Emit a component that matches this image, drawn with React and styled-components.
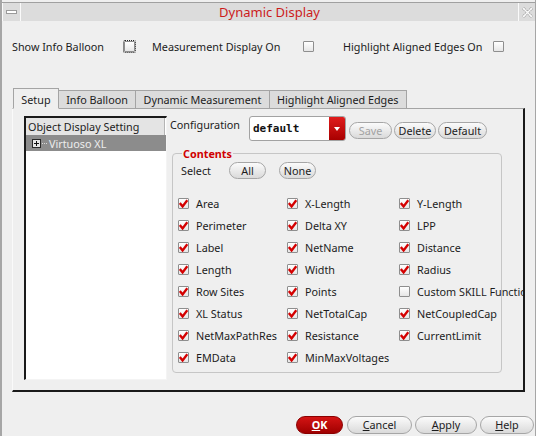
import React from 'react'
import styled, { createGlobalStyle } from 'styled-components'

const GlobalStyle = createGlobalStyle`
  html, body {
    margin: 0;
    padding: 0;
    background: #efefef;
  }
  body {
    font-family: 'Noto Sans', 'DejaVu Sans', sans-serif;
    font-size: 10.8px;
    color: #1c1c1c;
  }
`

const Window = styled.div`
  width: 536px;
  height: 436px;
  box-sizing: border-box;
  border-left: 2px solid #a6a6a6;
  border-right: 1px solid #a6a6a6;
  padding-top: 3px;
  overflow: hidden;
  background: #efefef;
`

const TitleBar = styled.div`
  display: flex;
  height: 18px;
  gap: 1px;
  padding-left: 1px;
  background: #fafafa;
  border-top: 1px solid #a0a0a0;
  margin-top: -1px;
`

const TitleButton = styled.div`
  width: ${p => p.$w}px;
  background: #dcdcdc;
  display: flex;
  align-items: center;
  justify-content: center;
`

const MinGlyph = styled.span`
  width: 9px;
  height: 2px;
  background: #fff;
  border: 1px solid #9a9a9a;
`

const Title = styled.div`
  flex: 1;
  background: #dcdcdc;
  color: #cc1b1b;
  font-size: 13px;
  line-height: 18px;
  text-align: center;
`

const TopRow = styled.div`
  display: flex;
  align-items: center;
  height: 16px;
  margin: 17px 0 0 10px;
`

const TopItem = styled.label`
  display: flex;
  align-items: center;
  margin-right: ${p => p.$after || 0}px;
`

const TopLabel = styled.span`
  width: ${p => p.$w}px;
  white-space: nowrap;
`

const Box = styled.span`
  display: inline-flex;
  align-items: center;
  justify-content: center;
  width: 11px;
  height: 11px;
  box-sizing: border-box;
  border: 1px solid #8e8e8e;
  border-radius: 1px;
  background: linear-gradient(#ffffff, #e6e6e6);
  flex: none;
  outline: ${p => (p.$focus ? '1px dotted #222' : 'none')};
  outline-offset: 0;
`

const Tabs = styled.div`
  display: flex;
  align-items: flex-end;
  height: 21px;
  margin: 34px 0 -1px 11px;
  position: relative;
  z-index: 1;
`

const Tab = styled.div`
  box-sizing: border-box;
  height: ${p => (p.$active ? 21 : 19)}px;
  padding: 0 7.3px;
  line-height: ${p => (p.$active ? 21 : 18)}px;
  border: 1px solid #a4a4a4;
  border-left: ${p => (p.$first ? '1px solid #a4a4a4' : 'none')};
  border-bottom: ${p => (p.$active ? '1px solid #efefef' : '1px solid #a4a4a4')};
  background: ${p => (p.$active ? '#efefef' : '#dcdcdc')};
  color: #1c1c1c;
  white-space: nowrap;
`

const Panel = styled.div`
  box-sizing: border-box;
  width: 513px;
  height: 284px;
  margin-left: 10px;
  border-top: 1px solid #a4a4a4;
  border-left: 1px solid #fafafa;
  border-right: 2px solid #1a1a1a;
  border-bottom: 2px solid #1a1a1a;
  padding: 7px 0 0 11px;
  display: flex;
  overflow: hidden;
`

const Tree = styled.div`
  box-sizing: border-box;
  width: 143px;
  height: 264px;
  flex: none;
  background: #fff;
  border-top: 2px solid #1a1a1a;
  border-left: 2px solid #1a1a1a;
  border-right: 1px solid #f4f4f4;
  border-bottom: 1px solid #f4f4f4;
`

const TreeHeader = styled.div`
  height: 17px;
  line-height: 17px;
  padding-left: 2px;
  background: #e4e4e4;
  border-right: 1px solid #b4b4b4;
  margin-right: 1px;
  white-space: nowrap;
  overflow: hidden;
`

const TreeRow = styled.div`
  height: 16px;
  display: flex;
  align-items: center;
  background: #8c8c8c;
  color: #ececec;
  padding-left: 6px;
`

const Expander = styled.span`
  width: 7px;
  height: 7px;
  border: 1px solid #2a2a2a;
  background: #e8e8e8;
  position: relative;
  flex: none;
  &::before {
    content: '';
    position: absolute;
    left: 1px;
    top: 3px;
    width: 5px;
    height: 1px;
    background: #111;
  }
  &::after {
    content: '';
    position: absolute;
    left: 3px;
    top: 1px;
    width: 1px;
    height: 5px;
    background: #111;
  }
`

const Dots = styled.span`
  width: 5px;
  margin: 0 2px 0 1px;
  border-top: 1px dotted #d8d8d8;
`

const Side = styled.div`
  margin-left: 3px;
  display: flex;
  flex-direction: column;
  min-width: 0;
`

const ConfigRow = styled.div`
  display: flex;
  align-items: flex-start;
  height: 25px;
`

const ConfigLabel = styled.span`
  width: 79px;
  line-height: 18px;
`

const Combo = styled.div`
  box-sizing: border-box;
  width: 97px;
  height: 25px;
  display: flex;
  border: 1px solid #a2a2a2;
  border-radius: 3px;
  background: #fff;
  margin-right: 3px;
`

const ComboText = styled.span`
  flex: 1;
  padding-left: 3px;
  line-height: 23px;
  font-family: 'DejaVu Sans Mono', 'Liberation Mono', monospace;
  font-weight: bold;
  font-size: 11px;
  color: #111;
`

const ComboArrow = styled.span`
  width: 16px;
  display: flex;
  align-items: center;
  justify-content: center;
  background: linear-gradient(#e01c1c, #a80000);
  border-radius: 0 2px 2px 0;
  &::after {
    content: '';
    border-left: 3px solid transparent;
    border-right: 3px solid transparent;
    border-top: 4px solid #fff;
  }
`

const Button = styled.button`
  box-sizing: border-box;
  width: ${p => p.$w}px;
  height: ${p => p.$h || 17}px;
  padding: 0;
  margin: ${p => p.$m || '0'};
  border: 1px solid #a6a6a6;
  border-radius: 9px;
  background: linear-gradient(#fbfbfb, #dadada);
  font-family: 'Noto Sans', 'DejaVu Sans', sans-serif;
  font-size: 10.8px;
  line-height: 14px;
  color: ${p => (p.$disabled ? '#a2a2a2' : '#1c1c1c')};
  flex: none;
`

const OkButton = styled(Button)`
  background: linear-gradient(#d41414, #a00000);
  border-color: #8a0000;
  color: #fff;
  font-weight: bold;
`

const Group = styled.div`
  box-sizing: border-box;
  width: 330px;
  height: 220px;
  margin: 12px 0 0 2px;
  border: 1px solid #c6c6c6;
  border-radius: 4px;
`

const GroupTitle = styled.div`
  width: fit-content;
  margin: -8px 0 0 9px;
  padding: 0 1px;
  line-height: 15px;
  background: #efefef;
  color: #d00000;
  font-weight: bold;
`

const SelectRow = styled.div`
  display: flex;
  align-items: center;
  margin: 1px 0 0 8px;
  height: 17px;
`

const SelectLabel = styled.span`
  width: 48px;
`

const Grid = styled.div`
  display: grid;
  grid-template-columns: 109px 112px 200px;
  grid-auto-rows: 22px;
  margin: 13px 0 0 5px;
`

const Item = styled.div`
  display: flex;
  align-items: center;
  gap: 7px;
  white-space: nowrap;
`

const Footer = styled.div`
  display: flex;
  justify-content: flex-end;
  gap: 3px;
  margin-top: 24px;
`

const U = styled.span`
  text-decoration: underline;
`

const Check = () => (
  <svg width="9" height="9" viewBox="0 0 9 9">
    <path d="M0.8 4 L3.6 7.4 L8.3 1.2" fill="none" stroke="#d40000" strokeWidth="2.4" />
  </svg>
)

const CheckBox = ({ checked, focus }) => (
  <Box $focus={focus}>{checked && <Check />}</Box>
)

const CloseGlyph = () => (
  <svg width="11" height="11" viewBox="0 0 11 11">
    <path d="M1 1 L10 10 M10 1 L1 10" stroke="#9c9c9c" strokeWidth="3" strokeDasharray="1 1" />
    <path d="M1 1 L10 10 M10 1 L1 10" stroke="#fafafa" strokeWidth="1.4" />
  </svg>
)

const items = [
  ['Area', true], ['X-Length', true], ['Y-Length', true],
  ['Perimeter', true], ['Delta XY', true], ['LPP', true],
  ['Label', true], ['NetName', true], ['Distance', true],
  ['Length', true], ['Width', true], ['Radius', true],
  ['Row Sites', true], ['Points', true], ['Custom SKILL Function', false],
  ['XL Status', true], ['NetTotalCap', true], ['NetCoupledCap', true],
  ['NetMaxPathRes', true], ['Resistance', true], ['CurrentLimit', true],
  ['EMData', true], ['MinMaxVoltages', true],
]

export default function App() {
  return (
    <>
      <GlobalStyle />
      <Window>
        <TitleBar>
          <TitleButton $w={17}><MinGlyph /></TitleButton>
          <Title>Dynamic Display</Title>
          <TitleButton $w={16}><CloseGlyph /></TitleButton>
        </TitleBar>

        <TopRow>
          <TopItem $after={17}>
            <TopLabel $w={112}>Show Info Balloon</TopLabel>
            <CheckBox focus />
          </TopItem>
          <TopItem $after={29}>
            <TopLabel $w={151}>Measurement Display On</TopLabel>
            <CheckBox />
          </TopItem>
          <TopItem>
            <TopLabel $w={150}>Highlight Aligned Edges On</TopLabel>
            <CheckBox />
          </TopItem>
        </TopRow>

        <Tabs>
          <Tab $active $first>Setup</Tab>
          <Tab>Info Balloon</Tab>
          <Tab>Dynamic Measurement</Tab>
          <Tab>Highlight Aligned Edges</Tab>
        </Tabs>

        <Panel>
          <Tree>
            <TreeHeader>Object Display Setting</TreeHeader>
            <TreeRow>
              <Expander />
              <Dots />
              Virtuoso XL
            </TreeRow>
          </Tree>

          <Side>
            <ConfigRow>
              <ConfigLabel>Configuration</ConfigLabel>
              <Combo>
                <ComboText>default</ComboText>
                <ComboArrow />
              </Combo>
              <Button $w={43} $m="6px 2px 0 0" $disabled>Save</Button>
              <Button $w={42} $m="6px 2px 0 0">Delete</Button>
              <Button $w={49} $m="6px 0 0 0">Default</Button>
            </ConfigRow>

            <Group>
              <GroupTitle>Contents</GroupTitle>
              <SelectRow>
                <SelectLabel>Select</SelectLabel>
                <Button $w={37} $m="0 13px 0 0">All</Button>
                <Button $w={37}>None</Button>
              </SelectRow>
              <Grid>
                {items.map(([label, on]) => (
                  <Item key={label}>
                    <CheckBox checked={on} />
                    {label}
                  </Item>
                ))}
              </Grid>
            </Group>
          </Side>
        </Panel>

        <Footer>
          <OkButton $w={47} $h={18} $m="0 1px 0 0"><U>O</U>K</OkButton>
          <Button $w={65} $h={18}><U>C</U>ancel</Button>
          <Button $w={62} $h={18}><U>A</U>pply</Button>
          <Button $w={54} $h={18} $m="0 1px 0 0"><U>H</U>elp</Button>
        </Footer>
      </Window>
    </>
  )
}
